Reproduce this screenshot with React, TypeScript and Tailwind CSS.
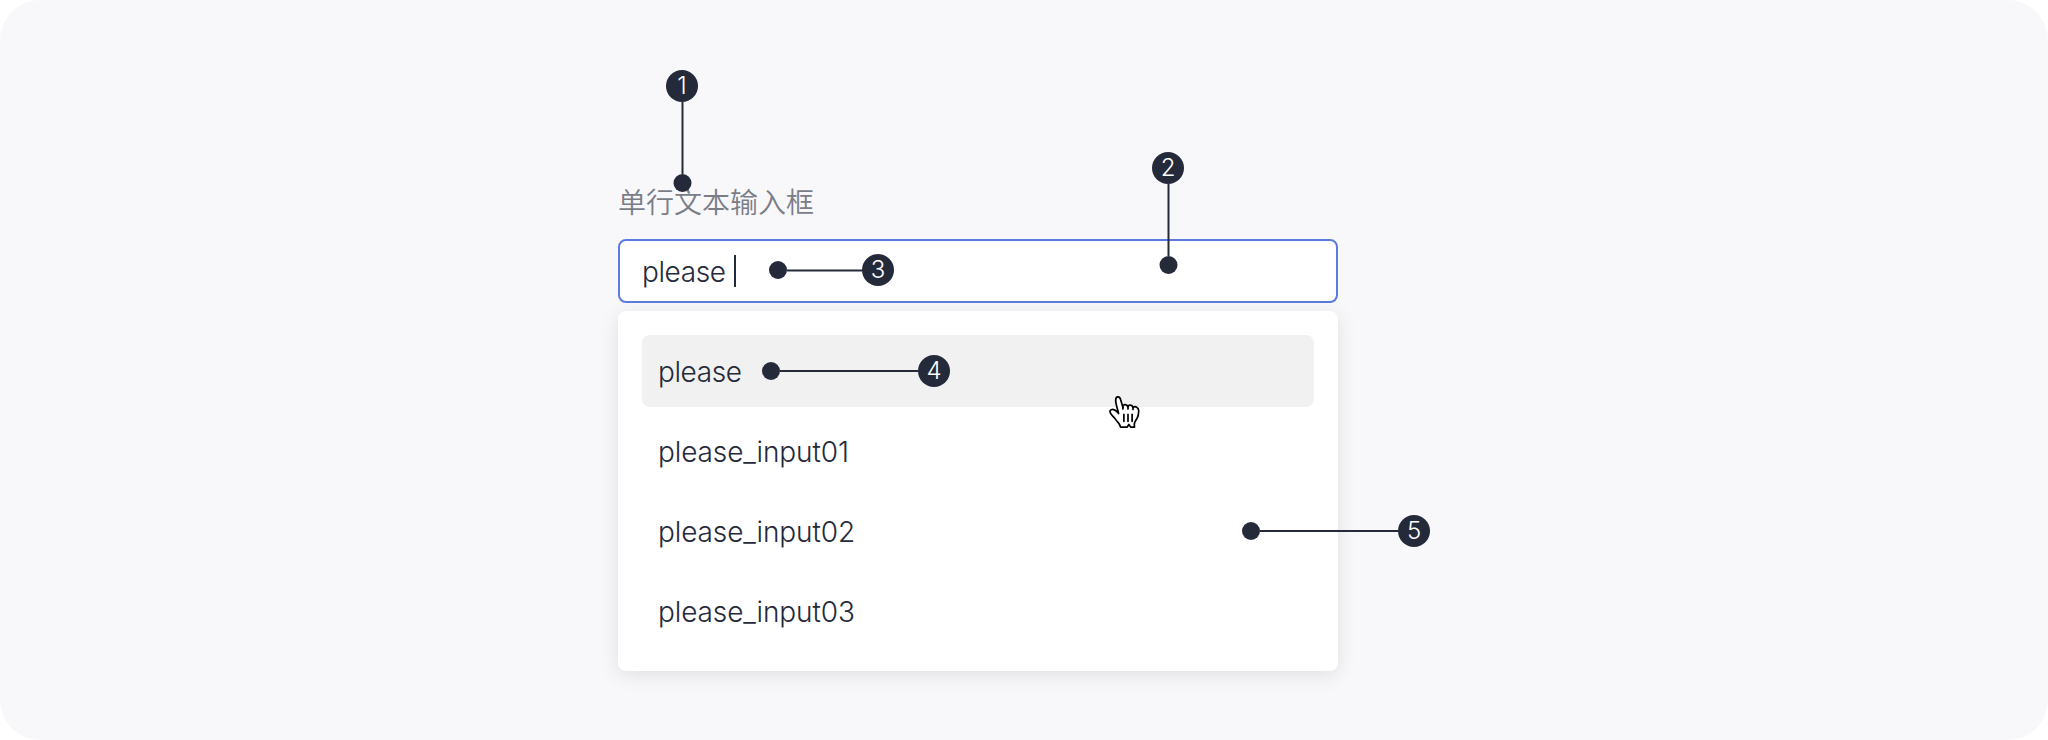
type MarkerProps = { label: string; className: string; lineClass: string };

const suggestions = ["please", "please_input01", "please_input02", "please_input03"];

function Badge({ label }: { label: string }) {
  return (
    <span className="flex size-8 shrink-0 items-center justify-center rounded-full bg-[#252a3b] text-2xl leading-8 font-light text-white">
      {label}
    </span>
  );
}

function Dot({ className = "" }: { className?: string }) {
  return <span className={`size-[18px] shrink-0 rounded-full bg-[#252a3b] ${className}`} />;
}

function VerticalMarker({ label, className, lineClass }: MarkerProps) {
  return (
    <div className={`absolute flex flex-col items-center ${className}`}>
      <Badge label={label} />
      <span className={`w-0.5 translate-x-[0.5px] bg-[#252a3b] ${lineClass}`} />
      <Dot className="translate-x-[0.5px]" />
    </div>
  );
}

function HorizontalMarker({ label, className, lineClass }: MarkerProps) {
  return (
    <div className={`absolute flex items-center ${className}`}>
      <Dot />
      <span className={`h-0.5 bg-[#252a3b] ${lineClass}`} />
      <Badge label={label} />
    </div>
  );
}

function HandCursor() {
  return (
    <svg
      className="absolute top-[396px] left-[1108px]"
      width="33"
      height="33"
      viewBox="0 0 33 33"
      fill="#fff"
      stroke="#000"
      strokeWidth="1.7"
      strokeLinejoin="round"
      strokeLinecap="round"
    >
      <path d="M10.6 17.6 C9.8 13.5 7.6 8.2 7.7 4 C7.8 0 11.6 -0.1 12.5 3.3 L14.9 11.2 C14.5 8.2 18.8 7.7 19.8 10.8 C20.7 8.2 24.2 8.6 24.9 11.3 C27.5 9.7 30.5 11.5 30.7 14.5 C30.8 17.5 30.4 20 28.8 22.8 C27.3 25 26.4 26.2 26.3 28 L26.5 31.2 L22.8 31.2 L20.9 28.5 L19 31.2 L12.6 31.2 C12.3 28 9.5 26.4 7.6 23.4 C5.5 20 1 17.6 2.1 14.8 C4.3 11.8 8.4 14.4 10.6 17.6 Z" />
      <path d="M15.9 18.3 V25.3 M20 18.3 V25.3 M24.1 18.3 V25.3 M20 11 V13 M25 11.5 V13.5 M14.9 11 V13" fill="none" />
    </svg>
  );
}

export default function App() {
  return (
    <main className="relative h-[740px] w-[2048px] overflow-hidden rounded-[40px] bg-[#f8f8fb] pt-[181px] pl-[618px] font-['Inter','Noto_Sans_CJK_SC',sans-serif] text-[28px] leading-10 font-light text-[#252a3b]">
      <div className="flex w-[720px] flex-col">
        <label className="mb-[18px] font-['Noto_Sans_CJK_SC',sans-serif] font-[350] text-[#7a7d87]">单行文本输入框</label>
        <div className="flex h-16 items-center rounded-lg border-2 border-[#5b7be0] bg-white pl-[22px]">
          <span className="w-[92px] pt-0.5 tracking-[-0.4px]">please</span>
          <span className="h-8 w-0.5 bg-[#252a3b]" />
        </div>
        <ul className="mt-2 flex flex-col gap-2 rounded-lg bg-white p-6 shadow-[0_4px_20px_rgba(0,0,0,0.1)]">
          {suggestions.map((text, i) => (
            <li
              key={text}
              className={`flex h-[72px] items-center rounded-lg pt-0.5 pl-4 ${i === 0 ? "bg-[#f1f1f1] tracking-[-0.4px]" : "tracking-[-0.12px]"}`}
            >
              {text}
            </li>
          ))}
        </ul>
      </div>
      <VerticalMarker label="1" className="top-[70px] left-[666px]" lineClass="h-[72px]" />
      <VerticalMarker label="2" className="top-[152px] left-[1152px]" lineClass="h-[72px]" />
      <HorizontalMarker label="3" className="top-[254px] left-[769px]" lineClass="w-[75px] translate-y-[0.5px]" />
      <HorizontalMarker label="4" className="top-[355px] left-[762px]" lineClass="w-[138px]" />
      <HorizontalMarker label="5" className="top-[515px] left-[1242px]" lineClass="w-[138px]" />
      <HandCursor />
    </main>
  );
}
